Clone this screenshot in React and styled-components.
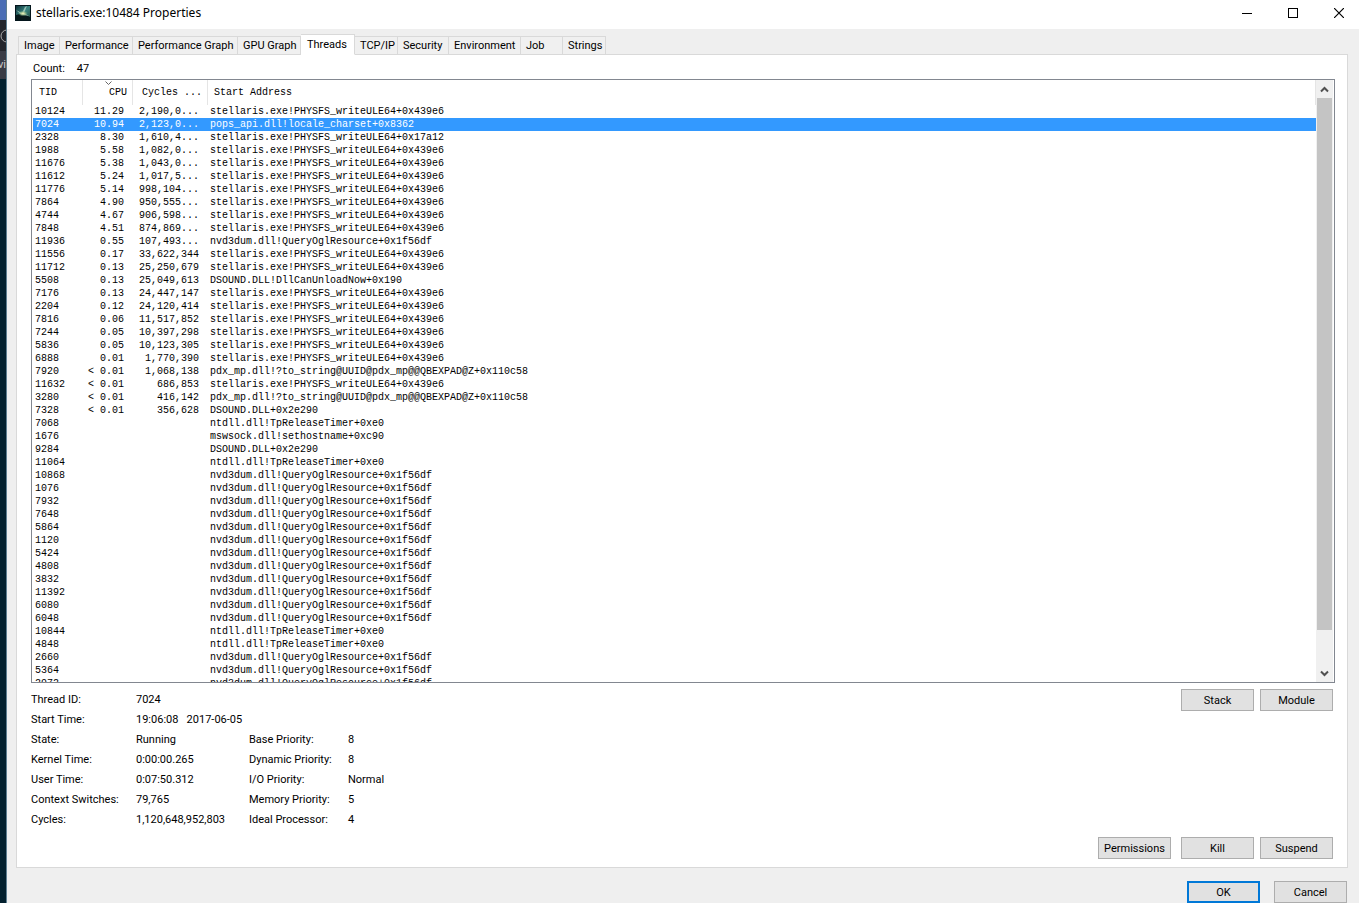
import React, { useState } from "react";
import styled, { createGlobalStyle } from "styled-components";

const GlobalStyle = createGlobalStyle`
  * {
    box-sizing: border-box;
  }

  body {
    margin: 0;
    background: #efefef;
    color: #000;
    font-family: Roboto, "Noto Sans", sans-serif;
    font-size: 11px;
    line-height: 16px;
  }

  button {
    font: inherit;
    color: inherit;
  }
`;

const Screen = styled.div`
  display: flex;
  height: 100vh;
  min-height: 480px;
  overflow: hidden;
`;

/* sliver of the desktop left visible beside the window */
const Desktop = styled.div`
  display: flex;
  flex-direction: column;
  flex: none;
  width: 7px;
  overflow: hidden;
  background: #03202e;
  border-right: 1px solid #5f7f92;
  color: #ccc;
`;

const DesktopBand = styled.div`
  flex: none;
  display: flex;
  align-items: center;
  justify-content: flex-end;
  height: ${(props) => props.$height}px;
  background: ${(props) => props.$color};
`;

const Window = styled.main`
  flex: 1;
  min-width: 0;
  display: flex;
  flex-direction: column;
`;

const TitleBar = styled.header`
  flex: none;
  display: flex;
  align-items: center;
  height: 29px;
  padding: 0 6px 3px 8px;
  background: #fff;
`;

const Title = styled.h1`
  flex: 1;
  margin: 0 0 0 5px;
  font-family: "Noto Sans", sans-serif;
  font-size: 12px;
  font-weight: 400;
`;

const CaptionButtons = styled.div`
  display: flex;
  gap: 18px;
`;

const CaptionButton = styled.button`
  display: flex;
  align-items: center;
  justify-content: center;
  width: 28px;
  height: 24px;
  padding: 0;
  border: none;
  background: none;
`;

const Tabs = styled.nav`
  flex: none;
  display: flex;
  align-items: flex-end;
  height: 26px;
  padding-left: 11px;
  margin-bottom: -1px;
  z-index: 1;
`;

const Tab = styled.button`
  width: ${(props) => props.$width}px;
  height: ${(props) => (props.$active ? 21 : 19)}px;
  padding: ${(props) => (props.$active ? "0 0 0 6px" : "1px 0 0 5px")};
  border: 1px solid #d9d9d9;
  border-left-width: ${(props) => (props.$first ? 1 : 0)}px;
  border-bottom-color: ${(props) => (props.$active ? "#fff" : "#d9d9d9")};
  background: ${(props) => (props.$active ? "#fff" : "#f0f0f0")};
  text-align: left;
  white-space: nowrap;
  line-height: 16px;
`;

const Page = styled.section`
  flex: 1;
  min-height: 0;
  display: flex;
  flex-direction: column;
  margin: 0 11px 0 9px;
  padding: 6px 12px 8px 14px;
  border: 1px solid #d9d9d9;
  background: #fff;
`;

const Count = styled.p`
  flex: none;
  display: flex;
  gap: 12px;
  margin: 0 0 2px 2px;
`;

const List = styled.div`
  flex: 1;
  min-height: 0;
  display: flex;
  border: 1px solid #828790;
`;

const Rows = styled.div`
  flex: 1;
  min-width: 0;
  overflow: hidden;
  padding-left: 1px;
`;

const Table = styled.table`
  width: 100%;
  table-layout: fixed;
  border-collapse: separate;
  border-spacing: 0;
  font-family: "Liberation Mono", monospace;
  font-size: 10px;
  line-height: 12px;
  white-space: pre;
`;

const HeadCell = styled.th`
  height: 25px;
  padding: 0 5px 0 ${(props) => props.$indent || 6}px;
  border-right: 1px solid #e5e5e5;
  font-weight: 400;
  vertical-align: top;
`;

const HeadLabel = styled.div`
  display: flex;
  flex-direction: column;
  align-items: ${(props) => (props.$right ? "flex-end" : "flex-start")};
`;

const SortMark = styled.span`
  align-self: center;
  display: flex;
  height: 7px;
`;

const Row = styled.tr`
  background: ${(props) => (props.$selected ? "#3399ff" : "transparent")};
  color: ${(props) => (props.$selected ? "#fff" : "#000")};
  cursor: default;
`;

const Cell = styled.td`
  height: 13px;
  padding: 1px ${(props) => (props.$right ? 9 : 0)}px 0 ${(props) => (props.$right ? 0 : 2)}px;
  text-align: ${(props) => (props.$right ? "right" : "left")};
`;

const Scrollbar = styled.div`
  flex: none;
  display: flex;
  flex-direction: column;
  width: 17px;
  margin-right: 1px;
  background: #f0f0f0;
`;

const ScrollButton = styled.button`
  display: flex;
  align-items: center;
  justify-content: center;
  height: 18px;
  padding: 0;
  border: none;
  background: none;
`;

const Track = styled.div`
  flex: 1;
  padding: 0 1px;
`;

const Thumb = styled.div`
  height: 94%;
  background: #c4c4c4;
`;

const Details = styled.div`
  flex: none;
  display: flex;
  justify-content: space-between;
  padding: 6px 2px 0 0;
`;

const Fields = styled.dl`
  display: grid;
  grid-template-columns: 105px 113px 99px auto;
  grid-auto-rows: 20px;
  align-items: center;
  margin: 0;
  padding-top: 1px;
  white-space: pre;
`;

const Term = styled.dt``;

const Value = styled.dd`
  margin: 0;
  grid-column: ${(props) => (props.$wide ? "span 3" : "auto")};
`;

const ButtonRow = styled.div`
  flex: none;
  display: flex;
  justify-content: flex-end;
  gap: 6px;
  padding: ${(props) => props.$pad || "0"};
`;

const PushButton = styled.button`
  width: 73px;
  height: 22px;
  padding: 1px 0 0;
  margin-left: ${(props) => props.$gap || 0}px;
  border: ${(props) => (props.$primary ? "2px solid #0078d7" : "1px solid #adadad")};
  background: #e1e1e1;
  line-height: 18px;
`;

const tabs = [
  { label: "Image", width: 42 },
  { label: "Performance", width: 73 },
  { label: "Performance Graph", width: 105 },
  { label: "GPU Graph", width: 63 },
  { label: "Threads", width: 54 },
  { label: "TCP/IP", width: 43 },
  { label: "Security", width: 51 },
  { label: "Environment", width: 72 },
  { label: "Job", width: 42 },
  { label: "Strings", width: 43 },
];

const PHYSFS = "stellaris.exe!PHYSFS_writeULE64+0x439e6";
const OGL = "nvd3dum.dll!QueryOglResource+0x1f56df";
const PDX = "pdx_mp.dll!?to_string@UUID@pdx_mp@@QBEXPAD@Z+0x110c58";
const TIMER = "ntdll.dll!TpReleaseTimer+0xe0";
const DSOUND = "DSOUND.DLL+0x2e290";

// tid, cpu, cycles delta, start address
const threads = [
  ["10124", "11.29", "2,190,0...", PHYSFS],
  ["7024", "10.94", "2,123,0...", "pops_api.dll!locale_charset+0x8362"],
  ["2328", "8.30", "1,610,4...", "stellaris.exe!PHYSFS_writeULE64+0x17a12"],
  ["1988", "5.58", "1,082,0...", PHYSFS],
  ["11676", "5.38", "1,043,0...", PHYSFS],
  ["11612", "5.24", "1,017,5...", PHYSFS],
  ["11776", "5.14", "998,104...", PHYSFS],
  ["7864", "4.90", "950,555...", PHYSFS],
  ["4744", "4.67", "906,598...", PHYSFS],
  ["7848", "4.51", "874,869...", PHYSFS],
  ["11936", "0.55", "107,493...", OGL],
  ["11556", "0.17", "33,622,344", PHYSFS],
  ["11712", "0.13", "25,250,679", PHYSFS],
  ["5508", "0.13", "25,049,613", "DSOUND.DLL!DllCanUnloadNow+0x190"],
  ["7176", "0.13", "24,447,147", PHYSFS],
  ["2204", "0.12", "24,120,414", PHYSFS],
  ["7816", "0.06", "11,517,852", PHYSFS],
  ["7244", "0.05", "10,397,298", PHYSFS],
  ["5836", "0.05", "10,123,305", PHYSFS],
  ["6888", "0.01", "1,770,390", PHYSFS],
  ["7920", "< 0.01", "1,068,138", PDX],
  ["11632", "< 0.01", "686,853", PHYSFS],
  ["3280", "< 0.01", "416,142", PDX],
  ["7328", "< 0.01", "356,628", DSOUND],
  ["7068", "", "", TIMER],
  ["1676", "", "", "mswsock.dll!sethostname+0xc90"],
  ["9284", "", "", DSOUND],
  ["11064", "", "", TIMER],
  ["10868", "", "", OGL],
  ["1076", "", "", OGL],
  ["7932", "", "", OGL],
  ["7648", "", "", OGL],
  ["5864", "", "", OGL],
  ["1120", "", "", OGL],
  ["5424", "", "", OGL],
  ["4808", "", "", OGL],
  ["3832", "", "", OGL],
  ["11392", "", "", OGL],
  ["6080", "", "", OGL],
  ["6048", "", "", OGL],
  ["10844", "", "", TIMER],
  ["4848", "", "", TIMER],
  ["2660", "", "", OGL],
  ["5364", "", "", OGL],
  ["2972", "", "", OGL],
];

const fields = [
  ["Thread ID:", "7024"],
  ["Start Time:", "19:06:08   2017-06-05"],
  ["State:", "Running", "Base Priority:", "8"],
  ["Kernel Time:", "0:00:00.265", "Dynamic Priority:", "8"],
  ["User Time:", "0:07:50.312", "I/O Priority:", "Normal"],
  ["Context Switches:", "79,765", "Memory Priority:", "5"],
  ["Cycles:", "1,120,648,952,803", "Ideal Processor:", "4"],
];

const AppIcon = () => (
  <svg width="16" height="16" viewBox="0 0 16 16" aria-hidden="true">
    <defs>
      <linearGradient id="sky" x1="0" y1="0" x2="1" y2="1">
        <stop offset="0" stopColor="#0d3038" />
        <stop offset="0.5" stopColor="#3a8580" />
        <stop offset="1" stopColor="#1f4a3c" />
      </linearGradient>
      <radialGradient id="flare" cx="0.5" cy="0.5" r="0.5">
        <stop offset="0" stopColor="#f4f6c0" />
        <stop offset="0.5" stopColor="#a9c58a" stopOpacity="0.7" />
        <stop offset="1" stopColor="#4f9a86" stopOpacity="0" />
      </radialGradient>
    </defs>
    <rect width="16" height="16" fill="#04151c" />
    <rect x="1" y="1" width="14" height="14" fill="url(#sky)" />
    <path d="M1 10 Q8 7 15 12 V15 H1 Z" fill="#07181a" />
    <path d="M1 5 L7 8 L10 2 L12 1 L9 8 L14 11 L6 9.5 Z" fill="#bfe0cf" opacity="0.7" />
    <ellipse cx="8" cy="8.5" rx="5" ry="3" fill="url(#flare)" />
  </svg>
);

const Chevron = ({ up }) => (
  <svg width="9" height="7" viewBox="0 0 9 7" aria-hidden="true">
    <path
      d={up ? "M1 5.5 L4.5 2 L8 5.5" : "M1 1.5 L4.5 5 L8 1.5"}
      fill="none"
      stroke="#505050"
      strokeWidth="2"
    />
  </svg>
);

const App = () => {
  const [selected, setSelected] = useState("7024");
  const [activeTab, setActiveTab] = useState("Threads");

  return (
    <Screen>
      <GlobalStyle />
      <Desktop>
        <DesktopBand $height={20} $color="#4b6eb5" />
        <DesktopBand $height={31} $color="#23252c">
          <svg width="6" height="14" viewBox="0 0 6 14" aria-hidden="true">
            <circle cx="7" cy="7" r="6" fill="none" stroke="#aaa" />
          </svg>
        </DesktopBand>
        <DesktopBand $height={28} $color="#393b45">
          vi
        </DesktopBand>
      </Desktop>
      <Window>
        <TitleBar>
          <AppIcon />
          <Title>stellaris.exe:10484 Properties</Title>
          <CaptionButtons>
            <CaptionButton aria-label="Minimize">
              <svg width="10" height="10" viewBox="0 0 10 10">
                <path d="M0 5.5 H10" stroke="#000" />
              </svg>
            </CaptionButton>
            <CaptionButton aria-label="Maximize">
              <svg width="10" height="10" viewBox="0 0 10 10">
                <rect x="0.5" y="0.5" width="9" height="9" fill="none" stroke="#000" />
              </svg>
            </CaptionButton>
            <CaptionButton aria-label="Close">
              <svg width="10" height="10" viewBox="0 0 10 10">
                <path d="M0 0 L10 10 M10 0 L0 10" stroke="#000" strokeWidth="1.2" />
              </svg>
            </CaptionButton>
          </CaptionButtons>
        </TitleBar>

        <Tabs>
          {tabs.map((tab, i) => (
            <Tab
              key={tab.label}
              type="button"
              $width={tab.width}
              $first={i === 0}
              $active={tab.label === activeTab}
              onClick={() => setActiveTab(tab.label)}
            >
              {tab.label}
            </Tab>
          ))}
        </Tabs>

        <Page>
          <Count>
            <span>Count:</span>
            <span>47</span>
          </Count>
          <List>
            <Rows>
              <Table>
                <colgroup>
                  <col style={{ width: 50 }} />
                  <col style={{ width: 50 }} />
                  <col style={{ width: 75 }} />
                  <col />
                </colgroup>
                <thead>
                  <tr>
                    <HeadCell>
                      <HeadLabel>
                        <SortMark />
                        TID
                      </HeadLabel>
                    </HeadCell>
                    <HeadCell>
                      <HeadLabel $right>
                        <SortMark>
                          <svg width="7" height="6" viewBox="0 0 7 6" aria-hidden="true">
                            <path d="M0.5 1.5 L3.5 4.5 L6.5 1.5" fill="none" stroke="#666" />
                          </svg>
                        </SortMark>
                        CPU
                      </HeadLabel>
                    </HeadCell>
                    <HeadCell $indent={9}>
                      <HeadLabel>
                        <SortMark />
                        Cycles ...
                      </HeadLabel>
                    </HeadCell>
                    <HeadCell>
                      <HeadLabel>
                        <SortMark />
                        Start Address
                      </HeadLabel>
                    </HeadCell>
                  </tr>
                </thead>
                <tbody>
                  {threads.map(([tid, cpu, cycles, address]) => (
                    <Row
                      key={tid}
                      $selected={tid === selected}
                      onClick={() => setSelected(tid)}
                    >
                      <Cell>{tid}</Cell>
                      <Cell $right>{cpu}</Cell>
                      <Cell $right>{cycles}</Cell>
                      <Cell>{address}</Cell>
                    </Row>
                  ))}
                </tbody>
              </Table>
            </Rows>
            <Scrollbar>
              <ScrollButton aria-label="Scroll up">
                <Chevron up />
              </ScrollButton>
              <Track>
                <Thumb />
              </Track>
              <ScrollButton aria-label="Scroll down">
                <Chevron />
              </ScrollButton>
            </Scrollbar>
          </List>

          <Details>
            <Fields>
              {fields.map(([term, value, term2, value2]) => (
                <React.Fragment key={term}>
                  <Term>{term}</Term>
                  <Value $wide={!term2}>{value}</Value>
                  {term2 && <Term>{term2}</Term>}
                  {term2 && <Value>{value2}</Value>}
                </React.Fragment>
              ))}
            </Fields>
            <ButtonRow>
              <PushButton type="button">Stack</PushButton>
              <PushButton type="button">Module</PushButton>
            </ButtonRow>
          </Details>
          <ButtonRow $pad="7px 2px 0 0">
            <PushButton type="button">Permissions</PushButton>
            <PushButton type="button" $gap={4}>
              Kill
            </PushButton>
            <PushButton type="button">Suspend</PushButton>
          </ButtonRow>
        </Page>

        <ButtonRow $pad="13px 12px 0 0">
          <PushButton type="button" $primary>
            OK
          </PushButton>
          <PushButton type="button" $gap={8}>
            Cancel
          </PushButton>
        </ButtonRow>
      </Window>
    </Screen>
  );
};

export default App;
